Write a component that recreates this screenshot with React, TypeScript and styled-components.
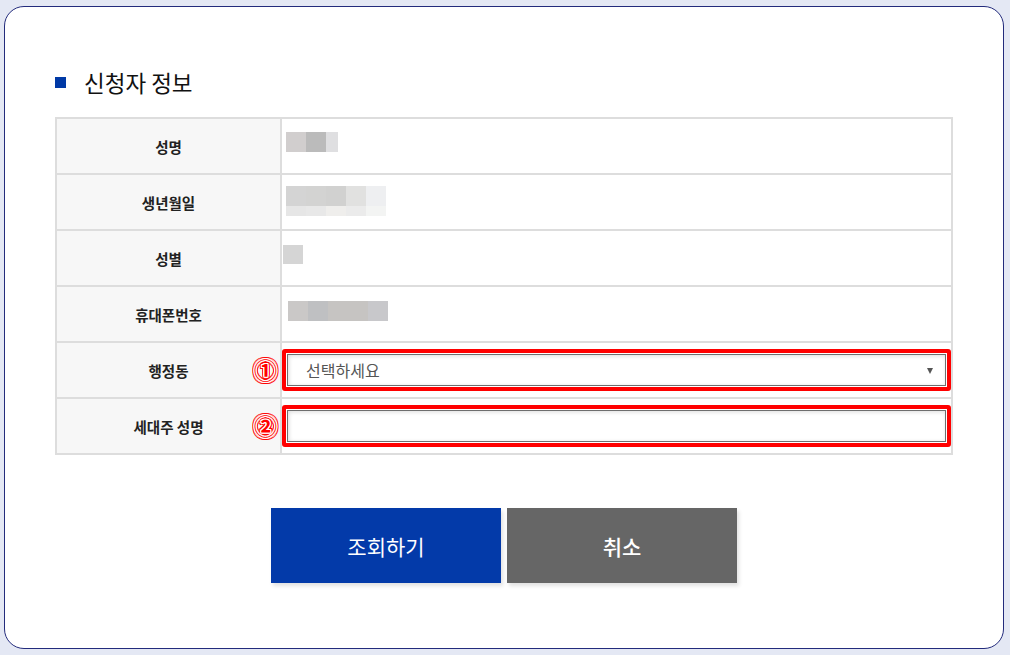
import React from "react";
import styled, { createGlobalStyle } from "styled-components";

const Global = createGlobalStyle`
  html, body { margin: 0; padding: 0; background: #e4e8f4; }
  body { font-family: "Noto Sans CJK KR", "Noto Sans", sans-serif; }
`;

const Page = styled.div`
  padding: 6px 6px 6px 4px;
`;

const Card = styled.div`
  box-sizing: border-box;
  height: 643px;
  background: #fff;
  border: 1px solid #232b7c;
  border-radius: 20px;
  padding: 60px 50px 0;
`;

const Title = styled.h2`
  margin: 0 0 20px;
  height: 30px;
  display: flex;
  align-items: center;
  gap: 18px;
  font-size: 22.5px;
  font-weight: 400;
  color: #111;
`;

const Bullet = styled.span`
  width: 11px;
  height: 11px;
  background: #0039a6;
`;

const Table = styled.div`
  border: 2px solid #dddddd;
`;

const Row = styled.div`
  display: flex;
  height: 54px;
  & + & {
    border-top: 2px solid #dddddd;
  }
`;

const Label = styled.div`
  position: relative;
  width: 223px;
  flex: none;
  background: #f7f7f7;
  border-right: 2px solid #dddddd;
  display: flex;
  align-items: center;
  justify-content: center;
  font-size: 14.5px;
  font-weight: 700;
  color: #222;
`;

const Value = styled.div<{ $center?: boolean }>`
  flex: 1;
  display: flex;
  flex-direction: column;
  justify-content: ${(p) => (p.$center ? "center" : "flex-start")};
`;

const Mosaic = styled.div<{ $x: number; $y: number }>`
  display: flex;
  flex-direction: column;
  margin: ${(p) => p.$y}px 0 0 ${(p) => p.$x}px;
`;

const MosaicRow = styled.div<{ $h: number }>`
  display: flex;
  height: ${(p) => p.$h}px;
`;

const Pixel = styled.span<{ $w: number; $c: string }>`
  width: ${(p) => p.$w}px;
  background: ${(p) => p.$c};
`;

const Marker = styled.span`
  position: absolute;
  right: 3px;
  top: 50%;
  transform: translateY(-52%);
  font-size: 23px;
  font-weight: 700;
  line-height: 1;
  color: #ff0000;
  text-shadow:
    1px 0 0 #fff, -1px 0 0 #fff, 0 1px 0 #fff, 0 -1px 0 #fff,
    1px 1px 0 #fff, -1px -1px 0 #fff, 1px -1px 0 #fff, -1px 1px 0 #fff,
    2px 0 0 #f00, -2px 0 0 #f00, 0 2px 0 #f00, 0 -2px 0 #f00,
    2px 2px 0 #f00, -2px -2px 0 #f00, 2px -2px 0 #f00, -2px 2px 0 #f00;
`;

const RedBox = styled.div`
  position: relative;
  border: 4px solid #ff0000;
  border-radius: 3px;
  padding: 1px;
`;

const Select = styled.select`
  display: block;
  width: 100%;
  height: 32px;
  box-sizing: border-box;
  border: 1px solid #6e6e6e;
  border-radius: 0;
  box-shadow: inset 1px 1px 4px rgba(0, 0, 0, 0.14);
  appearance: none;
  -webkit-appearance: none;
  background: #fff;
  padding: 0 0 0 18px;
  font-family: inherit;
  font-size: 16px;
  color: #555;
  outline: none;
`;

const Arrow = styled.span`
  position: absolute;
  right: 14px;
  top: 50%;
  margin-top: -2px;
  width: 0;
  height: 0;
  border-top: 6px solid #555;
  border-left: 3px solid transparent;
  border-right: 3px solid transparent;
  pointer-events: none;
`;

const Input = styled.input`
  display: block;
  width: 100%;
  height: 32px;
  box-sizing: border-box;
  border: 1px solid #6e6e6e;
  box-shadow: inset 1px 1px 4px rgba(0, 0, 0, 0.14);
  background: #fff;
  padding: 0 10px;
  font-family: inherit;
  font-size: 15px;
  outline: none;
`;

const Buttons = styled.div`
  display: flex;
  justify-content: center;
  gap: 6px;
  margin-top: 53px;
`;

const Button = styled.button<{ $variant: "primary" | "secondary" }>`
  width: 230px;
  height: 75px;
  border: none;
  padding: 0;
  background: ${(p) => (p.$variant === "primary" ? "#033aa9" : "#666666")};
  color: #fff;
  font-family: inherit;
  font-size: 21px;
  font-weight: ${(p) => (p.$variant === "primary" ? 400 : 500)};
  box-shadow: 2px 3px 4px rgba(0, 0, 0, 0.12);
  cursor: pointer;
`;

type MRow = { h: number; cells: [number, string][] };

const mosaics: Record<string, { x: number; y: number; rows: MRow[] }> = {
  name: {
    x: 4,
    y: 13,
    rows: [{ h: 20, cells: [[20, "#d1cece"], [20, "#bbbbbb"], [12, "#dfdfe1"]] }],
  },
  birth: {
    x: 4,
    y: 11,
    rows: [
      { h: 20, cells: [[20, "#d4d4d4"], [20, "#d3d3d2"], [20, "#d1d1d0"], [20, "#e1e1e0"], [20, "#eeeff1"]] },
      { h: 10, cells: [[20, "#e6e6e6"], [20, "#e8e8e8"], [20, "#efeeec"], [20, "#ebebeb"], [20, "#f3f4f3"]] },
    ],
  },
  gender: {
    x: 1,
    y: 14,
    rows: [{ h: 19, cells: [[20, "#d5d5d5"]] }],
  },
  phone: {
    x: 6,
    y: 14,
    rows: [{ h: 20, cells: [[20, "#cac8c7"], [20, "#bfc0c2"], [40, "#c6c4c2"], [20, "#c8c8cb"]] }],
  },
};

function Blur({ id }: { id: string }) {
  const m = mosaics[id];
  return (
    <Mosaic $x={m.x} $y={m.y}>
      {m.rows.map((r, i) => (
        <MosaicRow key={i} $h={r.h}>
          {r.cells.map(([w, c], j) => (
            <Pixel key={j} $w={w} $c={c} />
          ))}
        </MosaicRow>
      ))}
    </Mosaic>
  );
}

export default function App() {
  return (
    <>
      <Global />
      <Page>
        <Card>
          <Title>
            <Bullet />
            신청자 정보
          </Title>
          <Table>
            <Row>
              <Label>성명</Label>
              <Value>
                <Blur id="name" />
              </Value>
            </Row>
            <Row>
              <Label>생년월일</Label>
              <Value>
                <Blur id="birth" />
              </Value>
            </Row>
            <Row>
              <Label>성별</Label>
              <Value>
                <Blur id="gender" />
              </Value>
            </Row>
            <Row>
              <Label>휴대폰번호</Label>
              <Value>
                <Blur id="phone" />
              </Value>
            </Row>
            <Row>
              <Label>
                행정동
                <Marker>①</Marker>
              </Label>
              <Value $center>
                <RedBox>
                  <Select defaultValue="">
                    <option value="">선택하세요</option>
                  </Select>
                  <Arrow />
                </RedBox>
              </Value>
            </Row>
            <Row>
              <Label>
                세대주 성명
                <Marker>②</Marker>
              </Label>
              <Value $center>
                <RedBox>
                  <Input type="text" />
                </RedBox>
              </Value>
            </Row>
          </Table>
          <Buttons>
            <Button $variant="primary">조회하기</Button>
            <Button $variant="secondary">취소</Button>
          </Buttons>
        </Card>
      </Page>
    </>
  );
}
